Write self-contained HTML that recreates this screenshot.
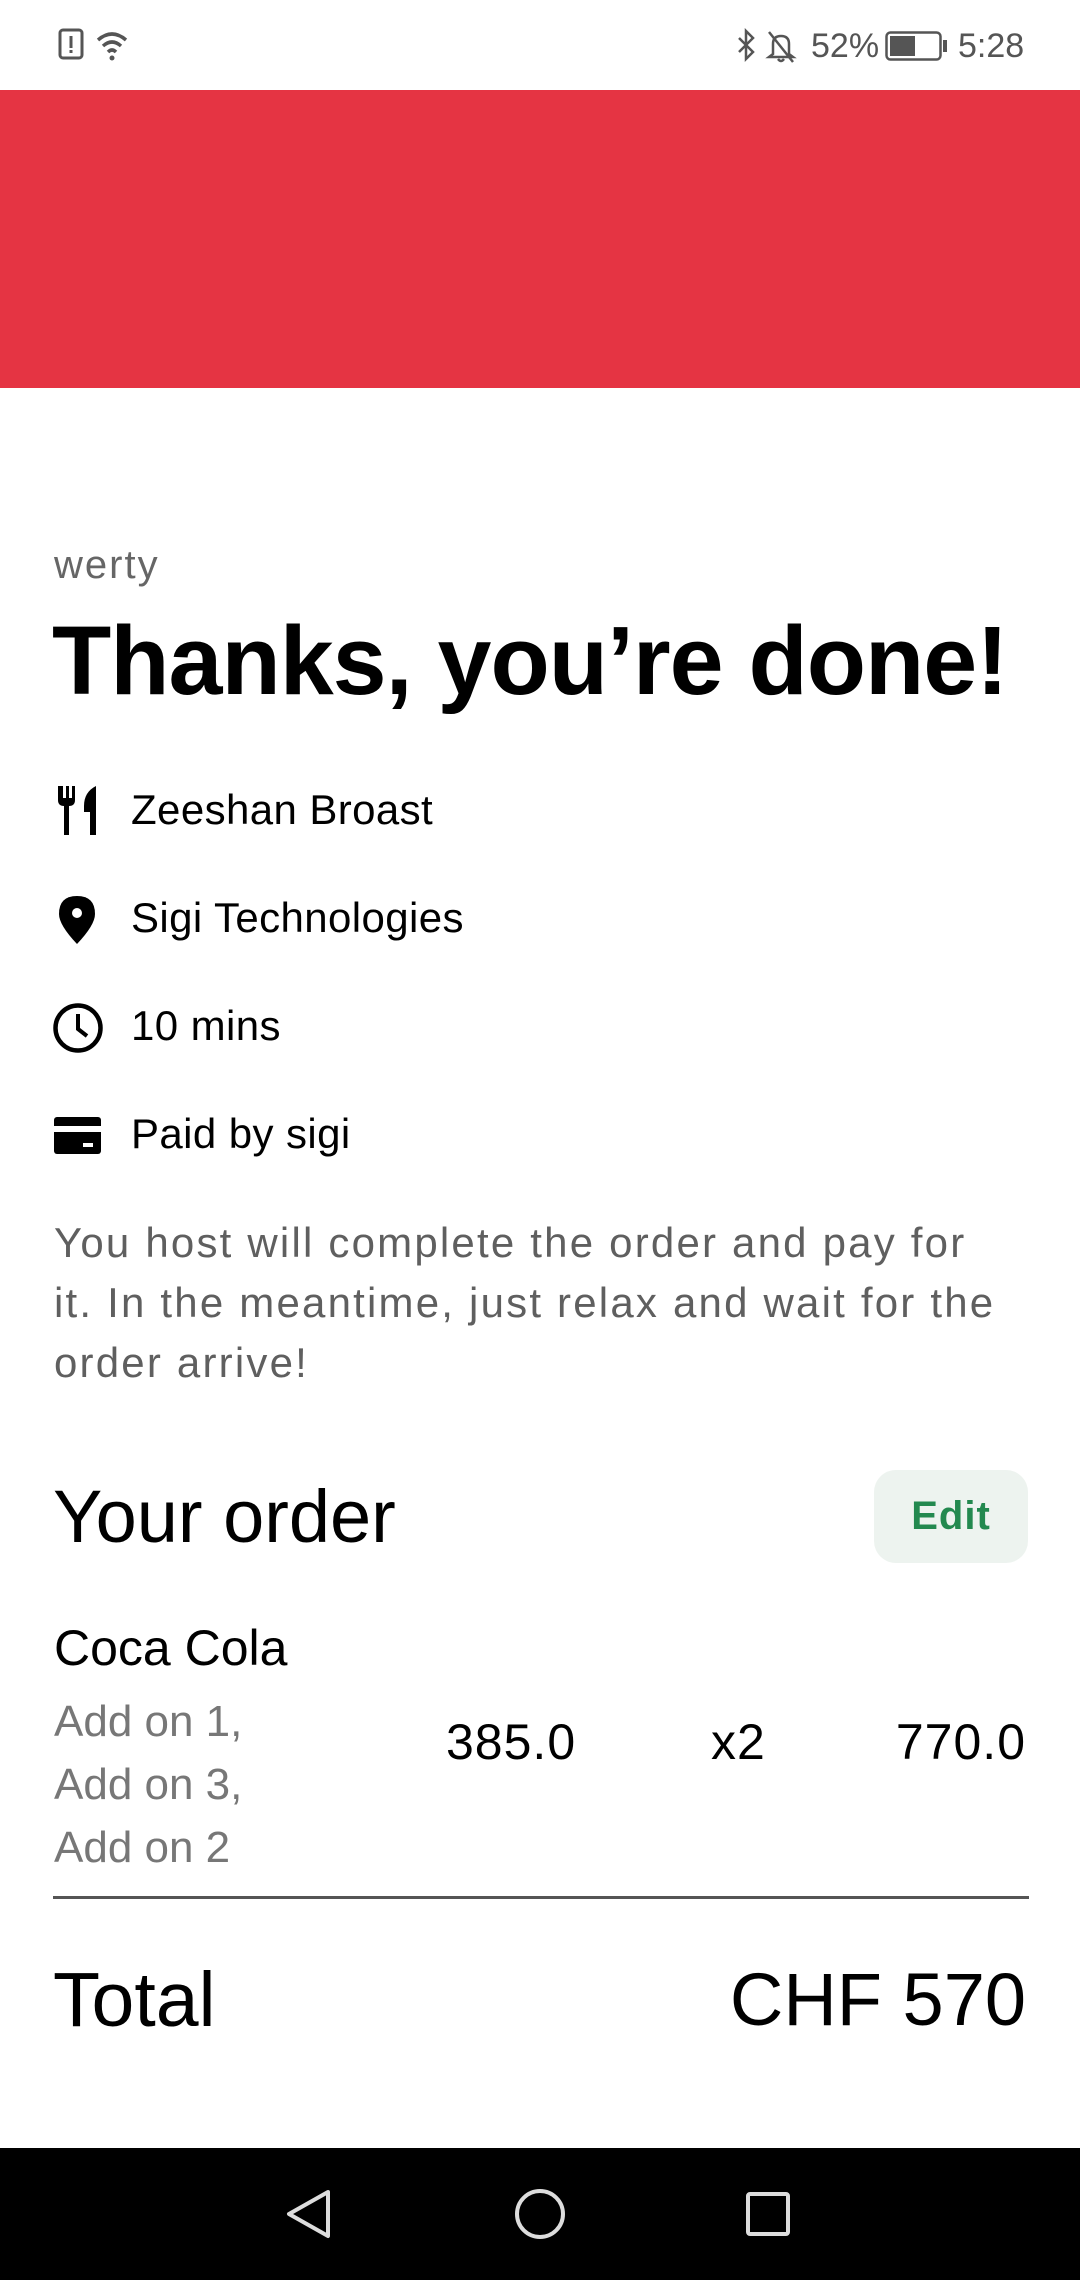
<!DOCTYPE html>
<html><head><meta charset="utf-8"><style>
*{margin:0;padding:0;box-sizing:border-box}
body{width:1080px;height:2280px;position:relative;background:#fff;font-family:"Liberation Sans",sans-serif;color:#000;overflow:hidden}
.a{position:absolute;white-space:nowrap}
</style></head><body>
<!-- status bar -->
<svg class="a" style="left:58px;top:28px" width="80" height="34" viewBox="0 0 80 34">
<rect x="2" y="2" width="22" height="28" rx="3" fill="none" stroke="#555" stroke-width="3"/>
<rect x="11.5" y="8" width="3" height="12" fill="#555"/><rect x="11.5" y="22" width="3" height="3" fill="#555"/>
<path d="M40 12 Q54 0 68 12" fill="none" stroke="#555" stroke-width="3.5"/>
<path d="M45 18 Q54 10 63 18" fill="none" stroke="#555" stroke-width="3.5"/>
<path d="M50 24 Q54 20 58 24" fill="none" stroke="#555" stroke-width="3.5"/>
<circle cx="54" cy="30" r="2.5" fill="#555"/>
</svg>
<svg class="a" style="left:735px;top:28px" width="70" height="36" viewBox="0 0 70 36">
<path d="M4 10 L18 24 L11 31 L11 3 L18 10 L4 24" fill="none" stroke="#555" stroke-width="2.5"/>
<path d="M38 26 L38 16 Q38 8 46 8 Q54 8 54 16 L54 26 L58 29 L34 29 Z M43 31 Q46 35 49 31" fill="none" stroke="#555" stroke-width="2.5"/>
<path d="M34 4 L58 34" stroke="#555" stroke-width="2.5"/>
</svg>
<div class="a" style="left:811px;top:26px;font-size:34px;line-height:40px;color:#555">52%</div>
<svg class="a" style="left:885px;top:31px" width="64" height="30" viewBox="0 0 64 30">
<rect x="1.5" y="1.5" width="54" height="27" rx="4" fill="none" stroke="#555" stroke-width="2.5"/>
<rect x="5" y="5" width="25" height="20" fill="#555"/><rect x="58" y="9" width="4" height="12" fill="#555"/>
</svg>
<div class="a" style="left:958px;top:26px;font-size:34px;line-height:40px;color:#555">5:28</div>

<div class="a" style="left:0;top:90px;width:1080px;height:298px;background:#e53443"></div>

<div class="a" style="left:54px;top:542px;font-size:40px;line-height:46px;color:#666;letter-spacing:2px">werty</div>
<div class="a" style="left:52px;top:608px;font-size:97px;line-height:106px;font-weight:bold;letter-spacing:-1px">Thanks, you’re done!</div>

<!-- icons -->
<svg class="a" style="left:56px;top:786px" width="44" height="50" viewBox="0 0 44 50">
<path d="M2 0 V14 Q2 20 8 20 V49 H13 V20 Q19 20 19 14 V0 H16 V12 H13 V0 H10 V12 H7 V0 Z" fill="#000"/>
<path d="M40 0 Q28 6 28 20 V26 H34 V49 H40 Z" fill="#000"/>
</svg>
<svg class="a" style="left:57px;top:895px" width="40" height="50" viewBox="0 0 40 50">
<path d="M20 1 Q38 1 38 19 Q38 30 20 49 Q2 30 2 19 Q2 1 20 1 Z" fill="#000"/><circle cx="20" cy="18" r="5" fill="#fff"/>
</svg>
<svg class="a" style="left:52px;top:1002px" width="52" height="52" viewBox="0 0 52 52">
<circle cx="26" cy="26" r="22.5" fill="none" stroke="#000" stroke-width="4.5"/>
<path d="M26 12 V27 L35 34" fill="none" stroke="#000" stroke-width="4"/>
</svg>
<svg class="a" style="left:54px;top:1117px" width="48" height="38" viewBox="0 0 48 38">
<rect x="0" y="0" width="47" height="37" rx="3" fill="#000"/>
<rect x="0" y="9" width="47" height="6" fill="#fff"/><rect x="29" y="26" width="10" height="4" fill="#fff"/>
</svg>
<div class="a" style="left:131px;top:786px;font-size:42px;line-height:48px;letter-spacing:0.4px">Zeeshan Broast</div>
<div class="a" style="left:131px;top:894px;font-size:42px;line-height:48px;letter-spacing:0.4px">Sigi Technologies</div>
<div class="a" style="left:131px;top:1002px;font-size:42px;line-height:48px;letter-spacing:0.4px">10 mins</div>
<div class="a" style="left:131px;top:1110px;font-size:42px;line-height:48px;letter-spacing:0.4px">Paid by sigi</div>

<div class="a" style="left:54px;top:1213px;font-size:42px;line-height:60px;color:#5f5f5f;letter-spacing:2.2px;white-space:pre">You host will complete the order and pay for
it. In the meantime, just relax and wait for the
order arrive!</div>

<div class="a" style="left:53px;top:1475px;font-size:74px;line-height:84px">Your order</div>
<div class="a" style="left:874px;top:1470px;width:154px;height:93px;border-radius:22px;background:#edf3ef;color:#23894f;font-size:40px;font-weight:bold;line-height:93px;text-align:center;letter-spacing:1px">Edit</div>

<div class="a" style="left:54px;top:1620px;font-size:50px;line-height:56px">Coca Cola</div>
<div class="a" style="left:54px;top:1690px;font-size:44px;line-height:63px;color:#777;white-space:pre">Add on 1,
Add on 3,
Add on 2</div>
<div class="a" style="left:446px;top:1714px;font-size:50px;line-height:56px;letter-spacing:1px">385.0</div>
<div class="a" style="left:711px;top:1714px;font-size:50px;line-height:56px;letter-spacing:1px">x2</div>
<div class="a" style="right:54px;top:1714px;font-size:50px;line-height:56px;letter-spacing:1px">770.0</div>

<div class="a" style="left:53px;top:1896px;width:976px;height:3px;background:#555"></div>

<div class="a" style="left:53px;top:1958px;font-size:77px;line-height:84px">Total</div>
<div class="a" style="right:54px;top:1958px;font-size:74px;line-height:84px">CHF 570</div>

<!-- nav bar -->
<div class="a" style="left:0;top:2148px;width:1080px;height:132px;background:#000"></div>
<svg class="a" style="left:0;top:2148px" width="1080" height="132" viewBox="0 0 1080 132">
<path d="M328 44 L289 66 L328 88 Z" fill="none" stroke="#ddd" stroke-width="4" stroke-linejoin="round"/>
<circle cx="540" cy="66" r="23" fill="none" stroke="#ddd" stroke-width="4"/>
<rect x="748" y="46" width="40" height="40" rx="2" fill="none" stroke="#ddd" stroke-width="4"/>
</svg>
</body></html>
